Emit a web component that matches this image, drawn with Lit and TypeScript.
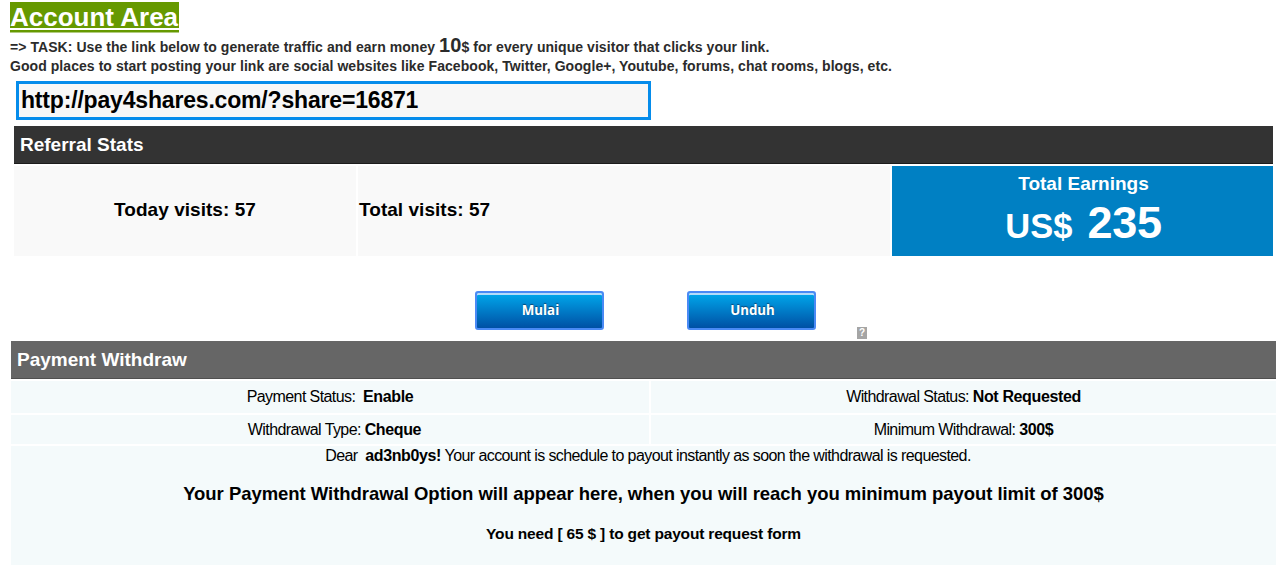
import { LitElement, html, css } from 'lit';
import { customElement, property, state } from 'lit/decorators.js';

@customElement('glossy-button')
class GlossyButton extends LitElement {
  static styles = css`
    :host {
      display: block;
    }
    button {
      display: block;
      box-sizing: border-box;
      width: 129px;
      height: 39px;
      padding: 0 0 2px 2px;
      border: 2px solid #4a8af5;
      border-radius: 3px;
      background: linear-gradient(#00a8ec, #0050a4);
      box-shadow: inset 0 2px 0 #b4dcfa;
      color: #fff;
      font: bold 13.3px 'Open Sans', sans-serif;
      text-shadow: 0 -1px 1px #0b4674;
      cursor: pointer;
    }
  `;

  @property() label = '';

  render() {
    return html`<button type="button">${this.label}</button>`;
  }
}

@customElement('app-root')
class AppRoot extends LitElement {
  static styles = css`
    :host {
      display: block;
      box-sizing: border-box;
      height: 576px;
      overflow: hidden;
      background: #fff;
      color: #000;
      font-family: 'Liberation Sans', Arial, sans-serif;
    }
    .intro {
      box-sizing: border-box;
      height: 81px;
      padding: 2px 0 0 10px;
      color: #2b2b2b;
      font-size: 14px;
      font-weight: bold;
      white-space: nowrap;
    }
    .title {
      width: 169px;
      height: 31px;
      margin: 0;
      background: linear-gradient(#690 26px, #fff 26px 28px, #690 28px 30px, #b2cc80 30px);
      color: #fff;
      font-size: 26px;
      line-height: 30px;
    }
    .task {
      display: flex;
      align-items: baseline;
      height: 24px;
      line-height: 24px;
      letter-spacing: 0.06px;
      white-space: pre;
    }
    .amount {
      font-size: 20px;
      font-weight: bold;
    }
    .places {
      height: 19px;
      line-height: 19px;
      letter-spacing: 0.06px;
    }
    .link {
      display: block;
      box-sizing: border-box;
      width: 635px;
      height: 39px;
      margin-left: 16px;
      padding: 0 2px;
      border: 3px solid #058ceb;
      border-radius: 0;
      outline: none;
      background: #f7f7f7;
      color: #000;
      font: bold 23px 'Liberation Sans', Arial, sans-serif;
      letter-spacing: -0.18px;
    }
    .bar {
      box-sizing: border-box;
      height: 38px;
      margin: 0;
      padding-left: 6px;
      color: #fff;
      font-size: 19px;
      line-height: 37px;
    }
    .stats {
      display: grid;
      grid-template-columns: 342px 532px 381px;
      grid-template-rows: 38px 90px;
      gap: 2px;
      width: 1259px;
      margin: 6px 0 0 14px;
    }
    .stats .bar {
      grid-column: 1 / -1;
      background: #333;
      border-bottom: 1px solid #1c1c1c;
    }
    .visits {
      display: flex;
      align-items: center;
      padding-bottom: 2px;
      background: #f9f9f9;
      font-size: 19px;
      font-weight: bold;
      letter-spacing: 0.04px;
    }
    .today {
      justify-content: center;
    }
    .total {
      padding-left: 1px;
    }
    .earnings {
      display: flex;
      flex-direction: column;
      align-items: center;
      padding-left: 2px;
      background: #0080c3;
      color: #fff;
      font-size: 19px;
      font-weight: bold;
    }
    .earnings-label {
      height: 30px;
      line-height: 35px;
    }
    .earnings-value {
      display: flex;
      align-items: baseline;
      gap: 15px;
      line-height: 54px;
    }
    .currency {
      font-size: 34.5px;
    }
    .sum {
      font-size: 45px;
      letter-spacing: -0.3px;
    }
    .actions {
      display: flex;
      height: 50px;
      margin-top: 35px;
      padding-left: 475px;
    }
    .actions glossy-button + glossy-button {
      margin-left: 83px;
    }
    .help {
      align-self: flex-end;
      width: 10px;
      height: 12px;
      margin: 0 0 2px 41px;
      background: #a5a5a5;
      color: #fff;
      font-size: 10px;
      font-weight: bold;
      line-height: 12px;
      text-align: center;
    }
    .withdraw {
      display: grid;
      grid-template-columns: 638px 625px;
      grid-template-rows: 38px 32px 29px 119px;
      gap: 2px;
      width: 1265px;
      margin-left: 11px;
      font-size: 16px;
      letter-spacing: -0.59px;
    }
    .withdraw .bar {
      grid-column: 1 / -1;
      background: #666;
      border-bottom: 1px solid #505050;
      letter-spacing: 0;
    }
    .cell {
      display: flex;
      align-items: center;
      justify-content: center;
      background: #f4fafb;
      white-space: pre;
    }
    .cell.shifted {
      padding-left: 9px;
    }
    .cell b,
    .message b {
      letter-spacing: -0.37px;
    }
    .message {
      grid-column: 1 / -1;
      background: #f4fafb;
      text-align: center;
      white-space: pre;
    }
    .message p {
      margin: 0;
    }
    .greeting {
      height: 19px;
      padding-left: 9px;
      line-height: 19px;
    }
    .notice {
      padding-top: 17px;
      font-size: 18.5px;
      font-weight: bold;
      line-height: 24px;
      letter-spacing: -0.04px;
    }
    .remaining {
      padding-top: 18px;
      font-size: 15.5px;
      font-weight: bold;
      line-height: 20px;
      letter-spacing: -0.18px;
    }
  `;

  @state() private _visits = { today: 57, total: 57 };
  @state() private _earned = 235;
  @state() private _minimum = 300;

  private _details = [
    { label: 'Payment Status:  ', value: 'Enable' },
    { label: 'Withdrawal Status: ', value: 'Not Requested' },
    { label: 'Withdrawal Type: ', value: 'Cheque', shifted: true },
    { label: 'Minimum Withdrawal: ', value: `${this._minimum}$` },
  ];

  render() {
    return html`
      <header class="intro">
        <h1 class="title">Account Area</h1>
        <div class="task"><span>=&gt; TASK: Use the link below to generate traffic and earn money </span><span class="amount">10</span><span>$ for every unique visitor that clicks your link.</span></div>
        <div class="places">Good places to start posting your link are social websites like Facebook, Twitter, Google+, Youtube, forums, chat rooms, blogs, etc.</div>
      </header>
      <input class="link" type="text" readonly .value=${'http://pay4shares.com/?share=16871'} />

      <section class="stats">
        <h2 class="bar">Referral Stats</h2>
        <div class="visits today">Today visits: ${this._visits.today}</div>
        <div class="visits total">Total visits: ${this._visits.total}</div>
        <div class="earnings">
          <div class="earnings-label">Total Earnings</div>
          <div class="earnings-value">
            <span class="currency">US$</span>
            <span class="sum">${this._earned}</span>
          </div>
        </div>
      </section>

      <div class="actions">
        <glossy-button label="Mulai"></glossy-button>
        <glossy-button label="Unduh"></glossy-button>
        <span class="help">?</span>
      </div>

      <section class="withdraw">
        <h2 class="bar">Payment Withdraw</h2>
        ${this._details.map(d => html`<div class="cell ${d.shifted ? 'shifted' : ''}"><span>${d.label}</span><b>${d.value}</b></div>`)}
        <div class="message">${this._renderMessage()}</div>
      </section>
    `;
  }

  // kept on tight lines, the message block preserves its spaces
  private _renderMessage() {
    return [
      html`<p class="greeting">Dear  <b>ad3nb0ys!</b> Your account is schedule to payout instantly as soon the withdrawal is requested.</p>`,
      html`<p class="notice">Your Payment Withdrawal Option will appear here, when you will reach you minimum payout limit of ${this._minimum}$</p>`,
      html`<p class="remaining">You need [ ${this._minimum - this._earned} $ ] to get payout request form</p>`,
    ];
  }
}
